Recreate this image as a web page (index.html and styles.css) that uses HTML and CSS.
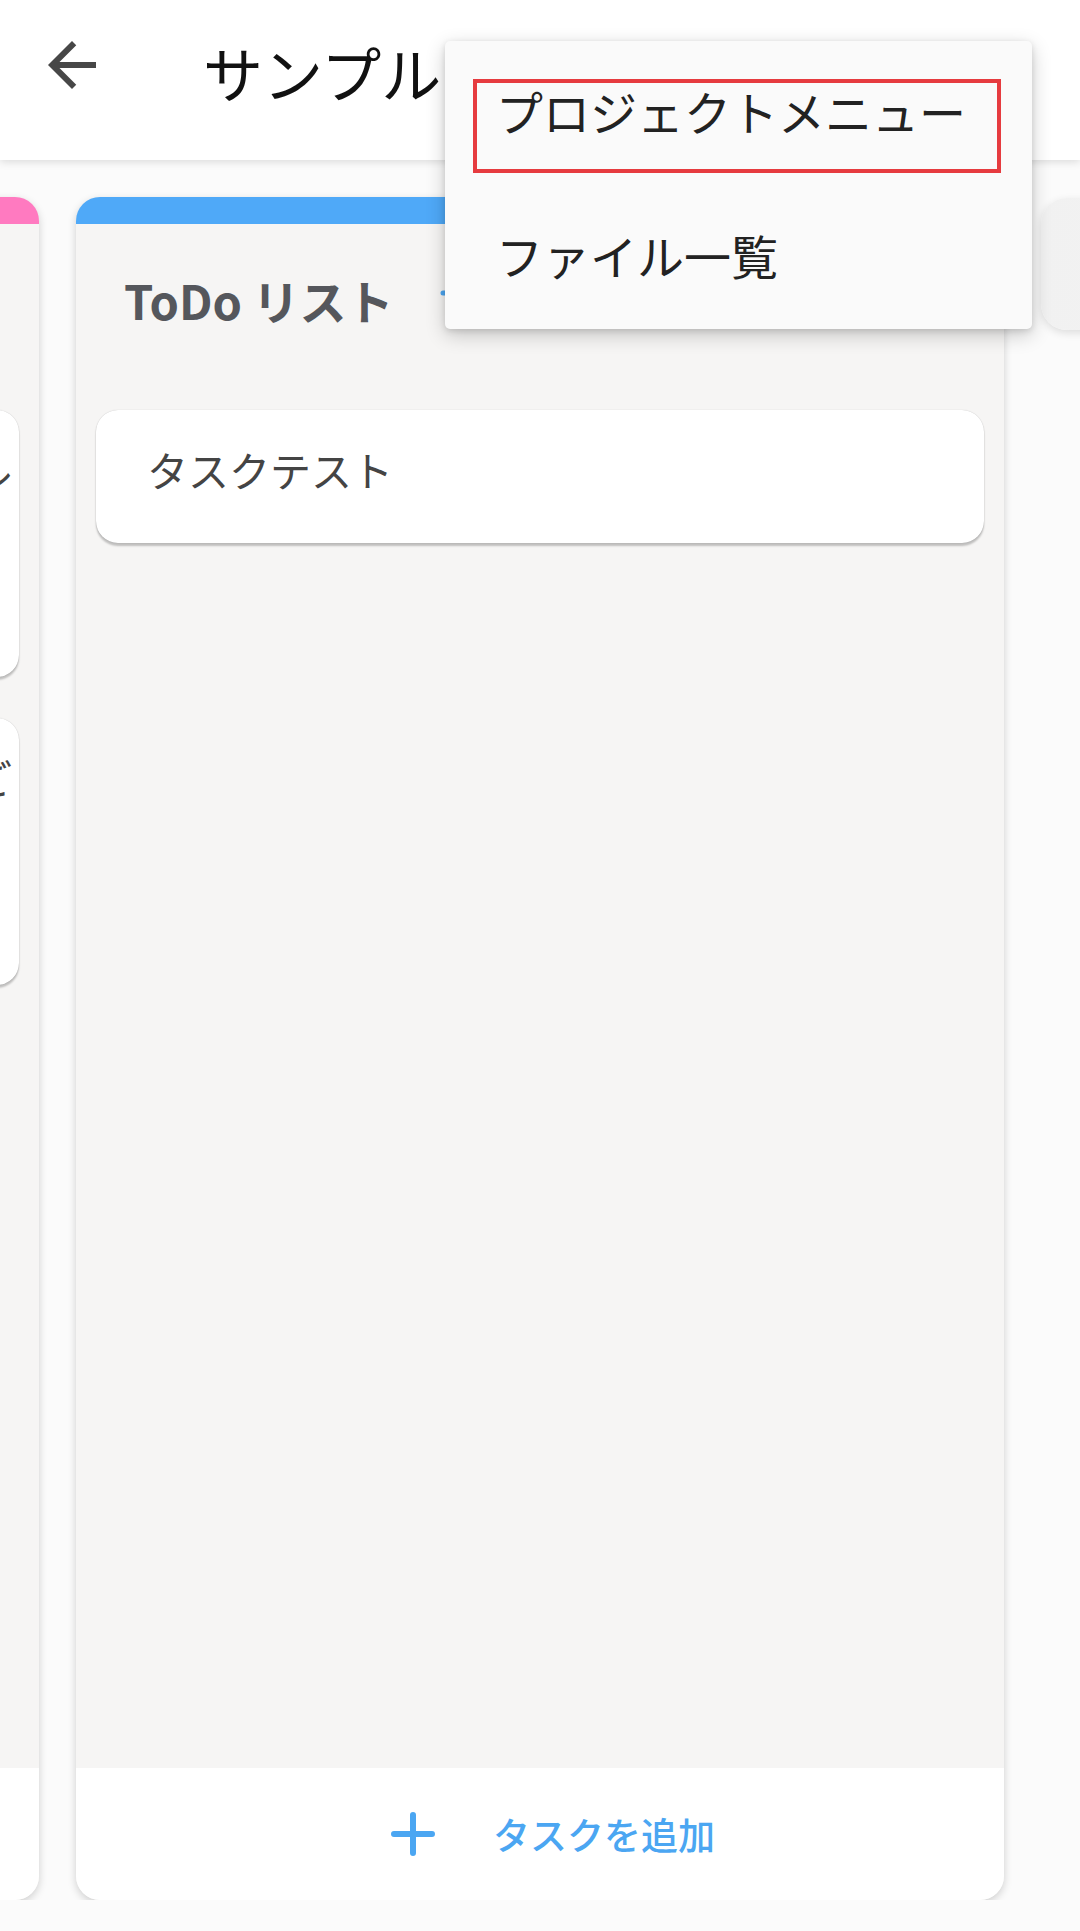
FILE: index.html
```html
<!DOCTYPE html>
<html lang="ja">
<head>
<meta charset="utf-8">
<title>サンプル</title>
<link rel="stylesheet" href="styles.css">
</head>
<body>
<header class="appbar">
  <svg class="back" viewBox="0 0 24 24" width="72" height="72"><path d="M20 11H7.83l5.59-5.59L12 4l-8 8 8 8 1.41-1.41L7.83 13H20v-2z" fill="#474747"/></svg>
  <h1 class="appbar-title">サンプル</h1>
</header>

<main class="board-viewport">
  <div class="board">
    <section class="column column--pink">
      <div class="column-head"><h2 class="column-title">進行中</h2></div>
      <div class="card-list">
        <div class="card"><p class="card-text card-text--indent">レイアウトの調整と確認を行い共有ファイルを整理して全員に送る。次回の打ち合わせで進捗を報告する予定です</p></div>
        <div class="card"><p class="card-text card-text--indent">来週の会議に向けた議事録と資料の準備をご確認ください。修正が必要な場合はコメントを残してください</p></div>
      </div>
      <div class="column-foot">
        <svg class="plus" viewBox="0 0 44 44" width="44" height="44"><path d="M22 3v38M3 22h38" stroke="#4ba6f2" stroke-width="6" stroke-linecap="round"/></svg>
        <span class="add-label">タスクを追加</span>
      </div>
    </section>

    <section class="column column--blue">
      <div class="column-head">
        <h2 class="column-title">ToDo リスト</h2>
        <svg class="head-icon" viewBox="0 0 40 40" width="40" height="40"><path d="M3 20h34M20 3v34" stroke="#4ba6f2" stroke-width="5" stroke-linecap="round"/></svg>
      </div>
      <div class="card-list">
        <div class="card"><p class="card-text">タスクテスト</p></div>
      </div>
      <div class="column-foot">
        <svg class="plus" viewBox="0 0 44 44" width="44" height="44"><path d="M22 3v38M3 22h38" stroke="#4ba6f2" stroke-width="6" stroke-linecap="round"/></svg>
        <span class="add-label">タスクを追加</span>
      </div>
    </section>

    <section class="add-list"></section>
  </div>
</main>

<div class="menu">
  <div class="menu-item menu-item--marked">プロジェクトメニュー<span class="highlight"></span></div>
  <div class="menu-item">ファイル一覧</div>
</div>
</body>
</html>
```

FILE: styles.css
```css
* { box-sizing: border-box; }

html, body {
  margin: 0;
  padding: 0;
}

body {
  width: 1080px;
  height: 1931px;
  overflow: hidden;
  background: #fbfbfb;
  font-family: "Noto Sans CJK JP", "Noto Sans", sans-serif;
  position: relative;
}

.appbar {
  position: relative;
  z-index: 2;
  height: 160px;
  background: #ffffff;
  box-shadow: 0 2px 8px rgba(0, 0, 0, 0.13);
  display: flex;
  align-items: flex-start;
}

.back {
  margin: 29px 0 0 36px;
  flex: none;
}

.appbar-title {
  margin: 42px 0 0 95px;
  font-size: 60px;
  line-height: 60px;
  font-weight: 400;
  color: #111111;
  white-space: nowrap;
}

.board-viewport {
  position: relative;
  z-index: 1;
  overflow: hidden;
  padding-top: 37px;
}

.board {
  display: flex;
  align-items: flex-start;
  gap: 37px;
  margin-left: -889px;
}

.column {
  flex: none;
  width: 928px;
  height: 1703px;
  border-radius: 24px;
  border-top: 27px solid #4fa9f8;
  background: #f6f5f4;
  box-shadow: 0 3px 8px rgba(0, 0, 0, 0.18);
  display: flex;
  flex-direction: column;
  overflow: hidden;
}

.column--pink { border-top-color: #ff7ac0; }
.column--blue { border-top-color: #4fa9f8; }

.column-head {
  display: flex;
  align-items: center;
  padding: 44px 48px 78px 48px;
  height: 186px;
}

.column-title {
  flex: none;
  width: 316px;
  margin: 0;
  font-size: 47px;
  line-height: 64px;
  font-weight: 700;
  color: #55575c;
  white-space: nowrap;
}

.head-icon {
  margin-top: -14px;
  flex: none;
}

.card-list {
  flex: 1;
  padding: 0 20px;
  display: flex;
  flex-direction: column;
  gap: 41px;
}

.card {
  background: #ffffff;
  border-radius: 22px;
  padding: 26px 0 40px 51px;
  box-shadow: 0 3px 2px rgba(0, 0, 0, 0.22), 0 0 1px rgba(0, 0, 0, 0.25);
}

.card-text {
  margin: 0;
  font-size: 41px;
  line-height: 67px;
  color: #444444;
}

.card-text--indent { text-indent: 10px; }

.column-foot {
  height: 132px;
  flex: none;
  background: #ffffff;
  display: flex;
  align-items: center;
  justify-content: center;
  gap: 58px;
  padding-left: 26px;
}

.add-label {
  font-size: 37px;
  line-height: 44px;
  font-weight: 500;
  color: #4ba6f2;
}

.add-list {
  flex: none;
  width: 600px;
  height: 132px;
  margin-top: 1px;
  border-radius: 26px;
  background: linear-gradient(to right, #f1f1f1, #f8f8f8);
  box-shadow: 0 3px 8px rgba(0, 0, 0, 0.12);
}

.menu {
  position: absolute;
  z-index: 5;
  top: 41px;
  left: 445px;
  width: 587px;
  background: #fafafa;
  border-radius: 5px;
  box-shadow: 0 6px 20px rgba(0, 0, 0, 0.2), 0 2px 6px rgba(0, 0, 0, 0.12);
}

.menu-item {
  position: relative;
  height: 144px;
  padding-left: 51px;
  font-size: 47px;
  line-height: 140px;
  color: #222222;
  white-space: nowrap;
}

.highlight {
  position: absolute;
  left: 28px;
  top: 38px;
  width: 528px;
  height: 94px;
  border: 4px solid #e63b3f;
}
```
